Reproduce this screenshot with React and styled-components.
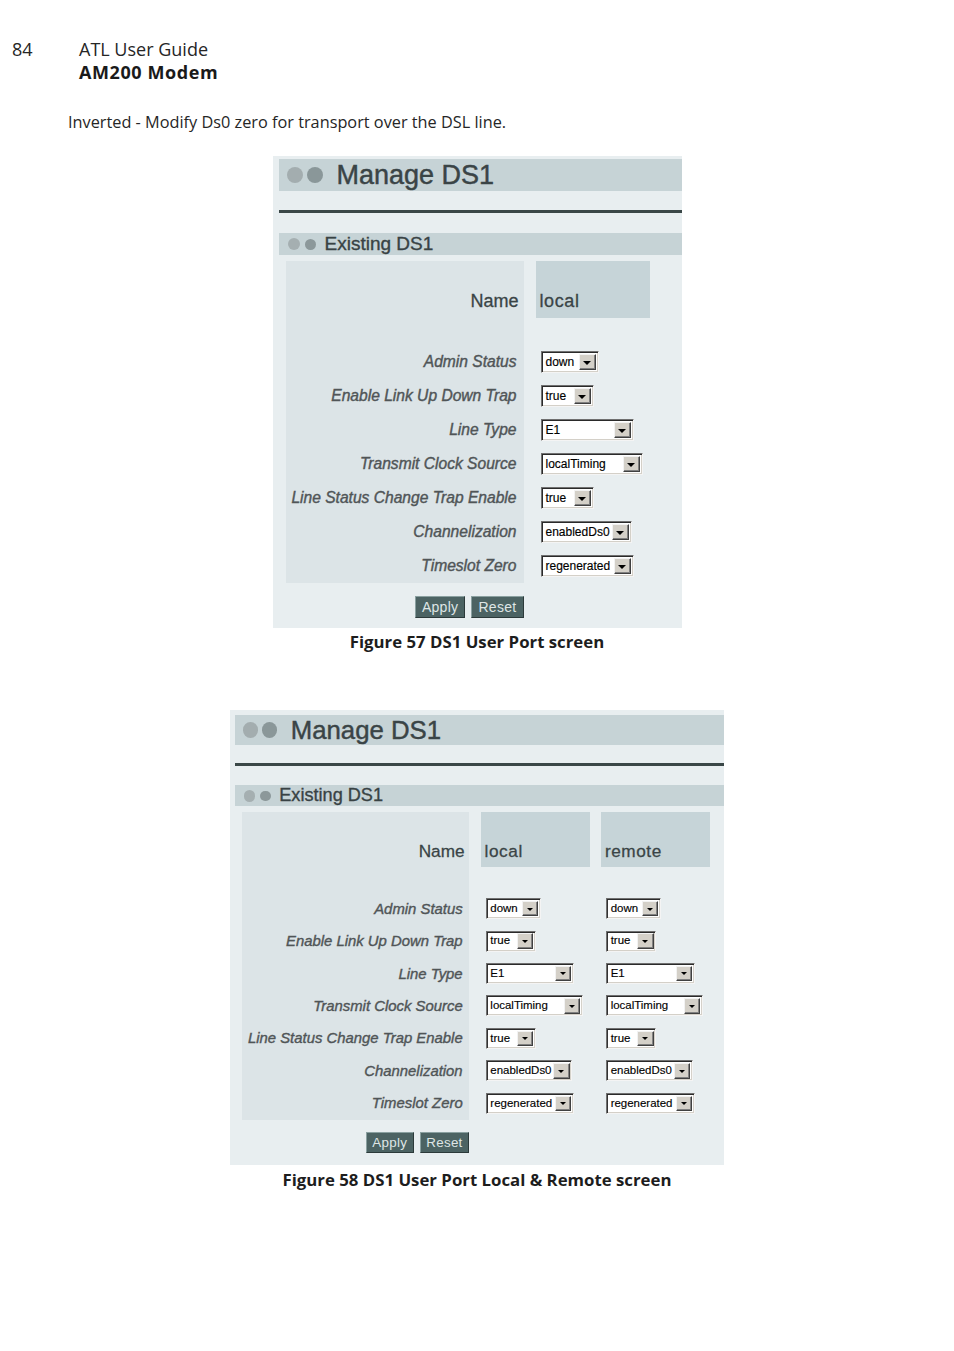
import React from 'react';
import styled, { createGlobalStyle } from 'styled-components';

const Global = createGlobalStyle`
  html, body { margin: 0; padding: 0; background: #fff; }
  body { font-family: "Open Sans", "Noto Sans", sans-serif; color: #1d1d1d; }
`;

const Page = styled.div`
  width: 954px;
  min-height: 1351px;
  display: flex;
  flex-direction: column;
`;

const Header = styled.header`
  display: flex;
  padding: 38px 0 0 12px;
  font-size: 18px;
  line-height: 23px;
  color: #262626;
`;

const PageNum = styled.div`
  width: 67px;
`;

const Titles = styled.div`
  display: flex;
  flex-direction: column;
`;

const Strong = styled.div`
  font-weight: 700;
  letter-spacing: 0.6px;
  color: #1a1a1a;
`;

const Intro = styled.p`
  margin: 27px 0 0 68px;
  font-size: 16.3px;
  line-height: 22px;
  color: #262626;
`;

const FigureBlock = styled.figure`
  margin: ${p => p.$top}px 0 0;
  display: flex;
  flex-direction: column;
  align-items: center;
`;

const Panel = styled.div`
  zoom: ${p => p.$zoom};
  width: ${p => p.$w}px;
  box-sizing: border-box;
  background: #e8eef0;
  padding: ${p => p.$padTop}px 0 ${p => p.$padBottom}px 6px;
  display: flex;
  flex-direction: column;
  font-family: "Liberation Sans", Arial, sans-serif;
`;

const TitleBar = styled.div`
  height: 32px;
  background: #c6d3d6;
  display: flex;
  align-items: center;
  padding-left: 8px;
`;

const Dot = styled.span`
  width: ${p => p.$d}px;
  height: ${p => p.$d}px;
  border-radius: 50%;
  background: ${p => p.$c};
  margin-right: ${p => p.$mr}px;
  flex: none;
`;

const Title = styled.h1`
  margin: 0;
  font-size: 27px;
  font-weight: 400;
  color: #3a4446;
  line-height: 32px;
  -webkit-text-stroke: 0.45px #3a4446;
`;

const Rule = styled.div`
  height: 3px;
  background: #3a4747;
  margin-top: 19px;
`;

const SectionBar = styled.div`
  height: 22px;
  margin-top: 20px;
  background: #c6d3d6;
  display: flex;
  align-items: center;
  padding-left: 9px;
`;

const SectionTitle = styled.h2`
  margin: 0;
  font-size: 19px;
  font-weight: 400;
  color: #384244;
  line-height: 22px;
  -webkit-text-stroke: 0.35px #384244;
`;

const Table = styled.div`
  margin: 6px 0 0 7px;
  display: grid;
  grid-template-columns: 238px repeat(${p => p.$n}, 114px);
  grid-template-rows: 57px 27px repeat(7, 34px);
  column-gap: 12px;
`;

const HeadLabel = styled.div`
  background: #dce4e7;
  display: flex;
  align-items: flex-end;
  justify-content: flex-end;
  padding: 0 5px 6px 0;
  font-size: 18px;
  line-height: 21px;
  color: #3a4446;
  -webkit-text-stroke: 0.3px #3a4446;
`;

const HeadValue = styled.div`
  background: #c6d4d8;
  display: flex;
  align-items: flex-end;
  padding: 0 0 6px 4px;
  font-size: 18px;
  line-height: 21px;
  letter-spacing: 0.6px;
  color: #3a4446;
  -webkit-text-stroke: 0.3px #3a4446;
`;

const LabelCell = styled.div`
  background: #dce4e7;
  display: flex;
  align-items: center;
  justify-content: flex-end;
  padding-right: 7px;
  font-size: 15.6px;
  font-style: italic;
  color: #505557;
  -webkit-text-stroke: 0.4px #505557;
  white-space: nowrap;
`;

const ValueCell = styled.div`
  display: flex;
  align-items: center;
  padding-left: 5px;
`;

const Select = styled.span`
  display: inline-flex;
  box-sizing: border-box;
  width: ${p => p.$w}px;
  height: 22px;
  background: #fff;
  border: 1px solid;
  border-color: #707070 #f4f4f4 #f4f4f4 #707070;
  box-shadow: inset 1px 1px 0 #2a2a2a, inset -1px -1px 0 #d4d0c8;
  padding: 2px;
`;

const SelectText = styled.span`
  flex: 1;
  font-size: 12px;
  line-height: 16px;
  color: #000;
  padding-left: 2px;
  overflow: hidden;
  white-space: nowrap;
  -webkit-text-stroke: 0.15px #000;
`;

const ArrowBtn = styled.span`
  width: 17px;
  flex: none;
  box-sizing: border-box;
  background: #d4d0c8;
  border: 1px solid;
  border-color: #f2f2f2 #404040 #404040 #f2f2f2;
  box-shadow: inset -1px -1px 0 #808080;
  display: flex;
  align-items: center;
  justify-content: center;

  &::after {
    content: "";
    width: 0;
    height: 0;
    border-left: 4px solid transparent;
    border-right: 4px solid transparent;
    border-top: 4px solid #000;
    margin-top: 1px;
  }
`;

const Actions = styled.div`
  margin: 13px 0 0 7px;
  width: 238px;
  display: flex;
  justify-content: flex-end;
  gap: 6px;
`;

const Button = styled.button`
  height: 22px;
  padding: 0 6px;
  background: #4c6363;
  color: #dfe6e6;
  font-family: "Liberation Sans", Arial, sans-serif;
  font-size: 14px;
  letter-spacing: 0.3px;
  border: 1px solid;
  border-color: #8aa0a0 #2c3a3a #2c3a3a #8aa0a0;
  cursor: pointer;
`;

const Caption = styled.figcaption`
  margin-top: ${p => p.$gap}px;
  font-size: 16.8px;
  line-height: 22px;
  font-weight: 700;
  color: #1d1d1d;
`;

const rows = [
  { label: 'Admin Status', value: 'down', w: 58 },
  { label: 'Enable Link Up Down Trap', value: 'true', w: 53 },
  { label: 'Line Type', value: 'E1', w: 93 },
  { label: 'Transmit Clock Source', value: 'localTiming', w: 102 },
  { label: 'Line Status Change Trap Enable', value: 'true', w: 53 },
  { label: 'Channelization', value: 'enabledDs0', w: 91 },
  { label: 'Timeslot Zero', value: 'regenerated', w: 93 },
];

const figures = [
  { caption: 'Figure 57 DS1 User Port screen', w: 409, zoom: 1, padTop: 3, padBottom: 10, top: 23, capGap: 3, cols: ['local'] },
  { caption: 'Figure 58 DS1 User Port Local & Remote screen', w: 518, zoom: 0.955, padTop: 5, padBottom: 13, top: 57, capGap: 4, cols: ['local', 'remote'] },
];

function Figure({ f }) {
  return (
    <FigureBlock $top={f.top}>
      <Panel $w={f.w} $zoom={f.zoom} $padTop={f.padTop} $padBottom={f.padBottom}>
        <TitleBar>
          <Dot $d={16} $c="#a3adaf" $mr={4} />
          <Dot $d={16} $c="#8a9799" $mr={14} />
          <Title>Manage DS1</Title>
        </TitleBar>
        <Rule />
        <SectionBar>
          <Dot $d={12} $c="#a5afb1" $mr={5} />
          <Dot $d={11} $c="#8c989a" $mr={9} />
          <SectionTitle>Existing DS1</SectionTitle>
        </SectionBar>
        <Table $n={f.cols.length}>
          <HeadLabel>Name</HeadLabel>
          {f.cols.map(c => <HeadValue key={c}>{c}</HeadValue>)}
          <LabelCell />
          {f.cols.map(c => <ValueCell key={c} />)}
          {rows.map(r => (
            <React.Fragment key={r.label}>
              <LabelCell>{r.label}</LabelCell>
              {f.cols.map(c => (
                <ValueCell key={c}>
                  <Select $w={r.w}>
                    <SelectText>{r.value}</SelectText>
                    <ArrowBtn />
                  </Select>
                </ValueCell>
              ))}
            </React.Fragment>
          ))}
        </Table>
        <Actions>
          <Button>Apply</Button>
          <Button>Reset</Button>
        </Actions>
      </Panel>
      <Caption $gap={f.capGap}>{f.caption}</Caption>
    </FigureBlock>
  );
}

export default function App() {
  return (
    <Page>
      <Global />
      <Header>
        <PageNum>84</PageNum>
        <Titles>
          <div>ATL User Guide</div>
          <Strong>AM200 Modem</Strong>
        </Titles>
      </Header>
      <Intro>Inverted - Modify Ds0 zero for transport over the DSL line.</Intro>
      {figures.map(f => <Figure key={f.caption} f={f} />)}
    </Page>
  );
}
